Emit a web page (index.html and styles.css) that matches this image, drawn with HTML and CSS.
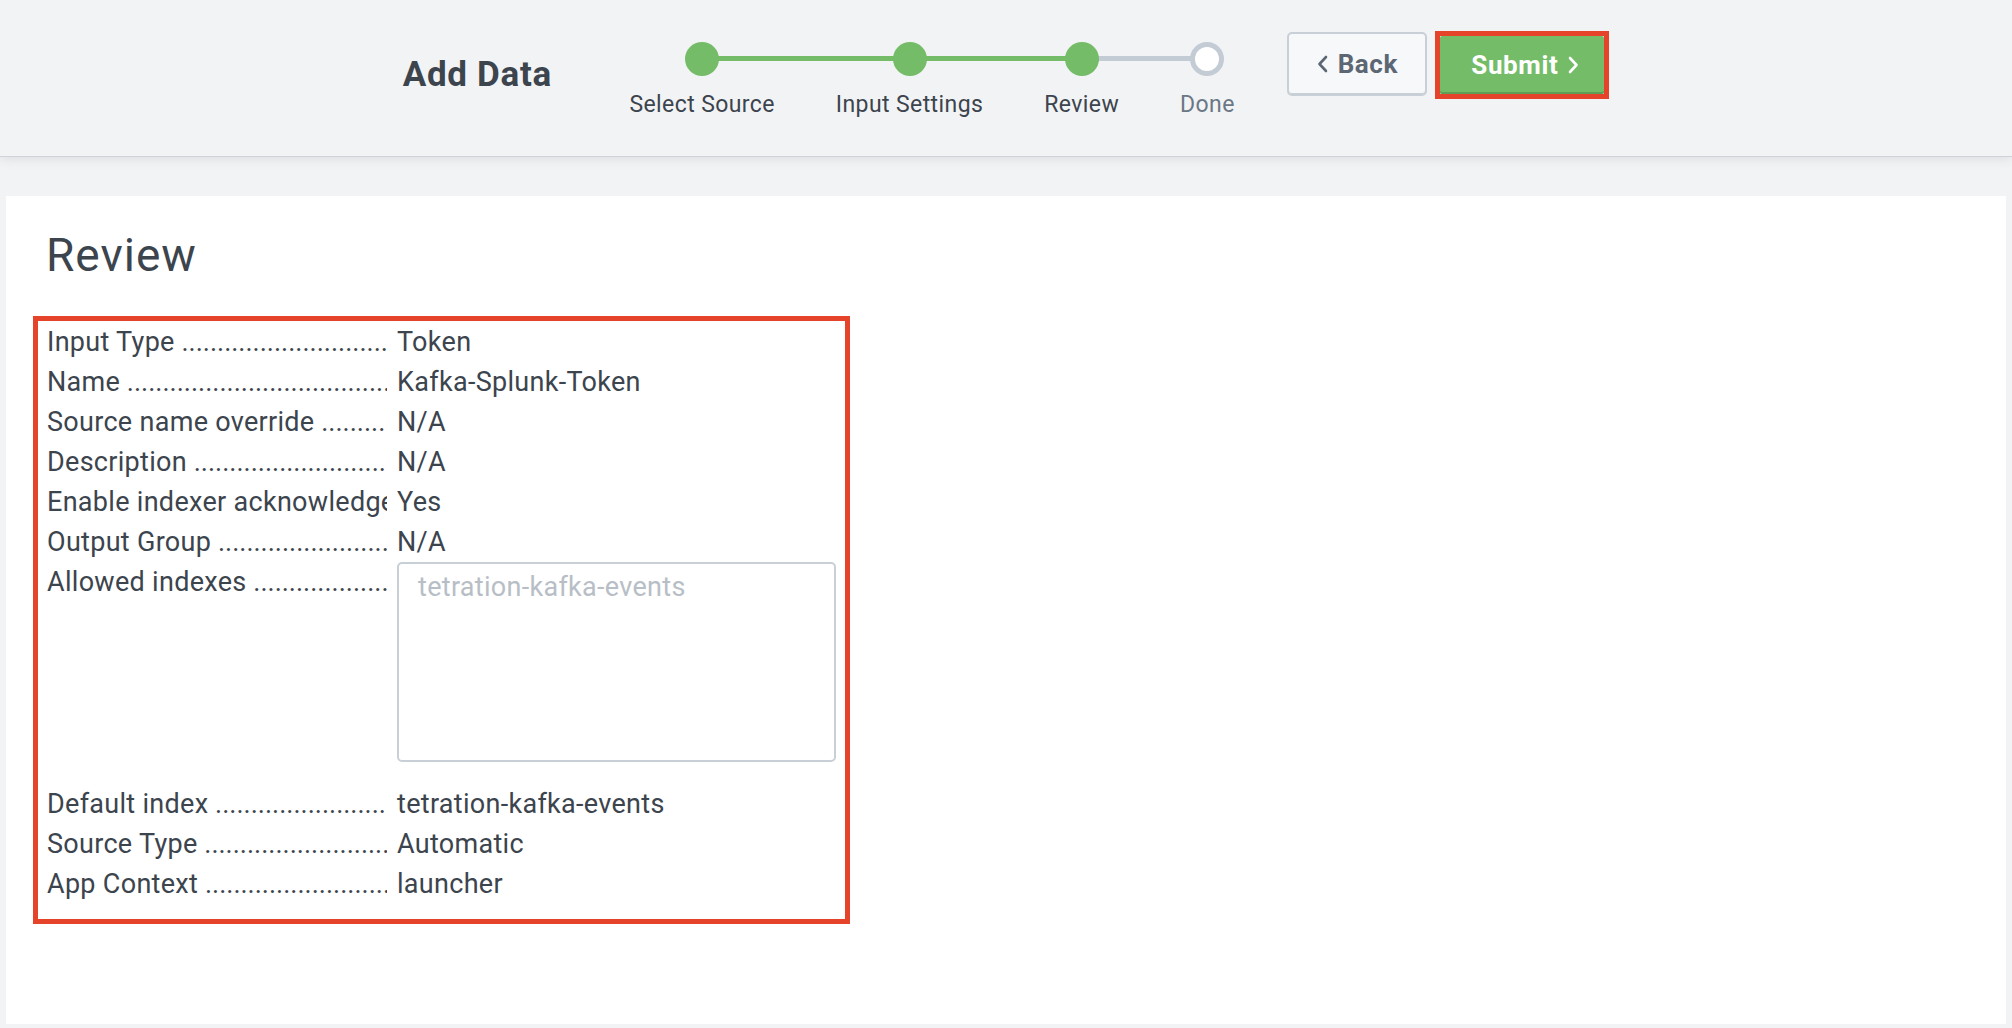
FILE: index.html
```html
<!DOCTYPE html>
<html lang="en">
<head>
<meta charset="utf-8">
<title>Add Data - Review</title>
<link rel="stylesheet" href="styles.css">
</head>
<body>
<header class="wizard-bar">
  <h1 class="wizard-title">Add Data</h1>
  <ol class="steps">
    <li class="step step--done"><span class="step-dot"></span><span class="step-label">Select Source</span></li>
    <li class="step step--done"><span class="step-dot"></span><span class="step-label">Input Settings</span></li>
    <li class="step step--current"><span class="step-dot"></span><span class="step-label">Review</span></li>
    <li class="step step--todo"><span class="step-dot"></span><span class="step-label">Done</span></li>
  </ol>
  <button class="btn btn-back" type="button">
    <svg class="chev" width="11" height="18" viewBox="0 0 11 18"><polyline points="9,2 2.5,9 9,16" fill="none" stroke="currentColor" stroke-width="2.6" stroke-linecap="round" stroke-linejoin="round"/></svg>
    <span>Back</span>
  </button>
  <div class="highlight highlight--button">
    <button class="btn btn-submit" type="button">
      <span>Submit</span>
      <svg class="chev" width="11" height="18" viewBox="0 0 11 18"><polyline points="2,2 8.5,9 2,16" fill="none" stroke="currentColor" stroke-width="2.6" stroke-linecap="round" stroke-linejoin="round"/></svg>
    </button>
  </div>
</header>

<main class="panel">
  <h2 class="panel-title">Review</h2>
  <dl class="review-list highlight">
    <dt class="label">Input Type</dt><dd class="value">Token</dd>
    <dt class="label">Name</dt><dd class="value">Kafka-Splunk-Token</dd>
    <dt class="label">Source name override</dt><dd class="value">N/A</dd>
    <dt class="label">Description</dt><dd class="value">N/A</dd>
    <dt class="label">Enable indexer acknowledgement</dt><dd class="value">Yes</dd>
    <dt class="label">Output Group</dt><dd class="value">N/A</dd>
    <dt class="label label--tall">Allowed indexes</dt><dd class="value value--tall"><textarea class="index-box" placeholder="tetration-kafka-events" readonly></textarea></dd>
    <dt class="label">Default index</dt><dd class="value">tetration-kafka-events</dd>
    <dt class="label">Source Type</dt><dd class="value">Automatic</dd>
    <dt class="label">App Context</dt><dd class="value">launcher</dd>
  </dl>
</main>
</body>
</html>
```

FILE: styles.css
```css
* { box-sizing: border-box; }

html, body {
  margin: 0;
  padding: 0;
}

body {
  height: 100vh;
  display: flex;
  flex-direction: column;
  background: #f2f3f5;
  font-family: Roboto, "Liberation Sans", Arial, sans-serif;
  color: #3c444d;
}

/* ---------- header ---------- */
.wizard-bar {
  flex: none;
  height: 156px;
  padding-top: 31px;
  display: flex;
  justify-content: center;
  align-items: flex-start;
  background: #f2f3f5;
  box-shadow: 0 1px 0 #cfd3d9, 0 3px 10px rgba(60, 70, 85, 0.12);
  position: relative;
  z-index: 1;
}

.wizard-title {
  margin: 24px 47px 0 0;
  font-size: 35px;
  line-height: 40px;
  font-weight: 700;
  letter-spacing: 0.7px;
  color: #3c444d;
}

.steps {
  list-style: none;
  margin: 11px 22px 0 0;
  padding: 0;
  display: flex;
}

.step {
  position: relative;
  display: flex;
  flex-direction: column;
  align-items: center;
  padding: 0 30.5px;
}

.step::before,
.step::after {
  content: "";
  position: absolute;
  top: 14px;
  height: 5px;
  background: #c3cbd4;
}
.step::before { left: 0; right: 50%; }
.step::after { left: 50%; right: 0; }
.step:first-child::before,
.step:last-child::after { display: none; }

.step--done::before,
.step--done::after,
.step--current::before { background: #74bc67; }

.step-dot {
  position: relative;
  z-index: 1;
  width: 34px;
  height: 34px;
  border-radius: 50%;
  background: #74bc67;
}
.step--todo .step-dot {
  background: #fff;
  border: 5px solid #c3cbd4;
}

.step-label {
  margin-top: 15px;
  font-size: 23px;
  line-height: 28px;
  letter-spacing: 0.4px;
  color: #3c444d;
  white-space: nowrap;
}
.step--todo .step-label { color: #6b7785; }

.btn {
  display: flex;
  align-items: center;
  justify-content: center;
  gap: 10px;
  font-family: inherit;
  font-size: 26px;
  font-weight: 700;
  letter-spacing: 0.6px;
  line-height: 1;
  cursor: pointer;
}

.btn-back {
  margin: 1px 8px 0 0;
  width: 140px;
  height: 64px;
  padding: 0;
  background: #f7f8fa;
  border: 2px solid #c9cfd6;
  border-radius: 5px;
  box-shadow: inset 0 -1px 0 #c9cfd6;
  color: #5c6773;
}

.highlight {
  border: 5px solid #e6432b;
}

.highlight--button {
  width: 174px;
  height: 68px;
}

.btn-submit {
  width: 100%;
  height: 100%;
  padding: 0 0 0 6px;
  background: #74bc67;
  border: 0;
  border-radius: 2px;
  box-shadow: inset 0 -2px 0 #5f9f55;
  color: #fff;
}

/* ---------- panel ---------- */
.panel {
  flex: 1;
  margin: 40px 6px 4px;
  padding: 31px 0 0 0;
  background: #fff;
}

.panel-title {
  margin: 0 0 33px 40px;
  font-size: 46px;
  line-height: 56px;
  font-weight: 400;
  letter-spacing: 1px;
  color: #3c444d;
}

.review-list {
  margin: 0 0 0 27px;
  width: 817px;
  padding: 1px 9px 15px;
  display: grid;
  grid-template-columns: 340px 439px;
  column-gap: 10px;
  font-size: 27px;
  line-height: 40px;
  letter-spacing: 0.3px;
}

.label,
.value {
  margin: 0;
  white-space: nowrap;
}

.label {
  overflow: hidden;
}
.label::after {
  content: " ....................................................................................................";
  letter-spacing: 0;
}

.value--tall {
  height: 200px;
  margin-bottom: 22px;
}

.index-box {
  display: block;
  width: 439px;
  height: 200px;
  margin: 0;
  padding: 3px 19px 1px;
  border: 2px solid #c9cfd6;
  border-radius: 5px;
  background: #fff;
  font-family: inherit;
  font-size: 27px;
  line-height: 40px;
  letter-spacing: 0.3px;
  color: #3c444d;
  resize: none;
  overflow: hidden;
  outline: none;
}
.index-box::placeholder {
  color: #b8bec6;
  opacity: 1;
}
```
